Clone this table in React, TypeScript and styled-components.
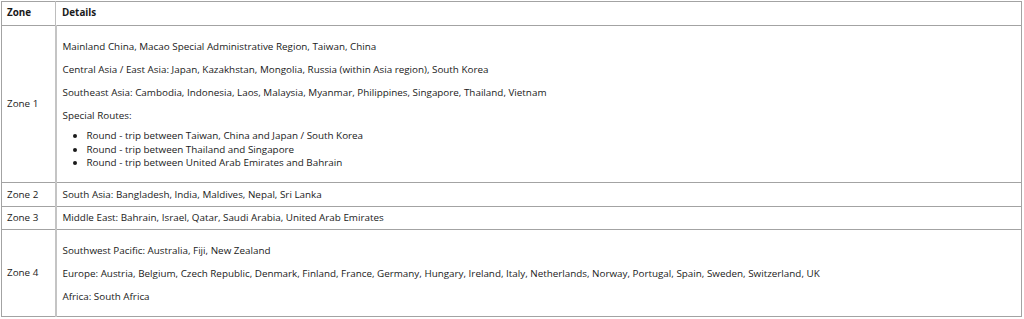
import React from 'react';
import styled, {createGlobalStyle} from 'styled-components';

const GlobalStyle = createGlobalStyle`
  body {
    margin: 0;
    background: #fff;
    color: #1a1a1a;
    font-family: "Open Sans", "Noto Sans", sans-serif;
    font-size: 9.85px;
  }
`;

const Page = styled.div`
  padding: 1px 2px 0 1px;
`;

const Table = styled.table`
  border-collapse: collapse;
  width: 100%;
  border: 1px solid #a3a3a3;
  line-height: 13.5px;
`;

const HeadCell = styled.th<{$narrow?: boolean}>`
  border: 1px solid #a3a3a3;
  border-right-color: ${p => (p.$narrow ? '#bdbdbd' : '#a3a3a3')};
  padding: 4px 6px 5px ${p => (p.$narrow ? '5px' : '6px')};
  text-align: left;
  font-weight: 700;
  width: ${p => (p.$narrow ? '42px' : 'auto')};
`;

const ZoneCell = styled.td`
  border: 1px solid #a3a3a3;
  border-right: 2px solid #c4c4c4;
  padding: 4.5px 6px 4.5px 5px;
  vertical-align: middle;
  white-space: nowrap;
`;

const DetailCell = styled.td`
  border: 1px solid #a3a3a3;
  padding: 4.5px 6px;
  vertical-align: middle;
`;

const Para = styled.p`
  margin: 9.5px 0 0;
`;

const List = styled.ul`
  margin: 7px 0 0;
  padding-left: 24px;
`;

const Tail = styled.div`
  height: 8px;
`;

interface IRow {
  zone: string;
  paras: string[];
  routes?: string[];
}

const rows: IRow[] = [
  {
    zone: 'Zone 1',
    paras: [
      'Mainland China, Macao Special Administrative Region, Taiwan, China',
      'Central Asia / East Asia: Japan, Kazakhstan, Mongolia, Russia (within Asia region), South Korea',
      'Southeast Asia: Cambodia, Indonesia, Laos, Malaysia, Myanmar, Philippines, Singapore, Thailand, Vietnam',
      'Special Routes:',
    ],
    routes: [
      'Round - trip between Taiwan, China and Japan / South Korea',
      'Round - trip between Thailand and Singapore',
      'Round - trip between United Arab Emirates and Bahrain',
    ],
  },
  {zone: 'Zone 2', paras: ['South Asia: Bangladesh, India, Maldives, Nepal, Sri Lanka']},
  {zone: 'Zone 3', paras: ['Middle East: Bahrain, Israel, Qatar, Saudi Arabia, United Arab Emirates']},
  {
    zone: 'Zone 4',
    paras: [
      'Southwest Pacific: Australia, Fiji, New Zealand',
      'Europe: Austria, Belgium, Czech Republic, Denmark, Finland, France, Germany, Hungary, Ireland, Italy, Netherlands, Norway, Portugal, Spain, Sweden, Switzerland, UK',
      'Africa: South Africa',
    ],
  },
];

function Details ({paras, routes}: IRow) {
  if (paras.length === 1 && !routes) {
    return <>{paras[0]}</>;
  }

  return (
    <>
      {paras.map(text => <Para key={text}>{text}</Para>)}
      {routes && (
        <List>
          {routes.map(r => <li key={r}>{r}</li>)}
        </List>
      )}
      <Tail />
    </>
  );
}

export default function App () {
  return (
    <Page>
      <GlobalStyle />
      <Table>
        <thead>
          <tr>
            <HeadCell $narrow={true}>Zone</HeadCell>
            <HeadCell>Details</HeadCell>
          </tr>
        </thead>
        <tbody>
          {rows.map(row => (
            <tr key={row.zone}>
              <ZoneCell>{row.zone}</ZoneCell>
              <DetailCell>
                <Details {...row} />
              </DetailCell>
            </tr>
          ))}
        </tbody>
      </Table>
    </Page>
  );
}
